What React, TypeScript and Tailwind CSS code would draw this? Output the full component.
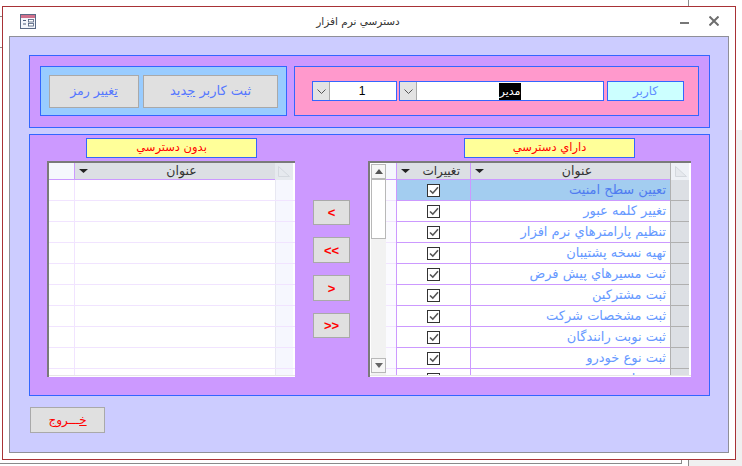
const rows = [
  "تعيين سطح امنيت",
  "تغيير كلمه عبور",
  "تنظيم پارامترهاي نرم افزار",
  "تهيه نسخه پشتيبان",
  "ثبت مسيرهاي پيش فرض",
  "ثبت مشتركين",
  "ثبت مشخصات شركت",
  "ثبت نوبت رانندگان",
  "ثبت نوع خودرو",
  "ثبت راننده",
];

const font = { fontFamily: '"DejaVu Sans", sans-serif' };

function Caret() {
  return (
    <svg width="9" height="4" viewBox="0 0 9 4" className="shrink-0">
      <path d="M0 0h9L4.5 4z" fill="#222" />
    </svg>
  );
}

function Corner() {
  return (
    <svg width="12" height="11" viewBox="0 0 12 11">
      <path d="M0.5 0.5L11.5 10.5H0.5z" fill="#e6e9ee" stroke="#d4d8de" />
    </svg>
  );
}

function Chevron() {
  return (
    <svg width="9" height="5" viewBox="0 0 9 5">
      <path d="M0.5 0.5L4.5 4.5L8.5 0.5" fill="none" stroke="#555" strokeWidth="1" />
    </svg>
  );
}

function Check() {
  return (
    <div className="w-[13px] h-[13px] shrink-0 border border-[#333] bg-white flex items-center justify-center">
      <svg width="10" height="9" viewBox="0 0 10 9">
        <path d="M1 4.5L3.8 7.2L9 1.2" fill="none" stroke="#555" strokeWidth="1.6" />
      </svg>
    </div>
  );
}

function ArrowBtn({ label, cls }: { label: string; cls: string }) {
  return (
    <button
      className={`${cls} w-[37px] bg-[#e0e0e0] border border-[#a9a9a9] flex items-center justify-center text-[#ff0000] text-[13px] font-bold leading-none`}
      style={{ fontFamily: '"Liberation Sans", sans-serif' }}
    >
      {label}
    </button>
  );
}

function RightGrid() {
  return (
    <div className="w-[323px] h-[216px] bg-white border-t-2 border-l-2 border-t-[#7a7a7a] border-l-[#7a7a7a] pb-[1px]">
      <div className="h-full flex overflow-hidden border-b border-[#e6e6e6]">
        <div className="w-[15px] mt-[1px] ml-[1px] shrink-0 bg-[#f2f2f2] flex flex-col">
          <div className="h-[15px] border border-[#b8b8b8] bg-[#f6f6f6] flex items-center justify-center">
            <svg width="8" height="5" viewBox="0 0 8 5"><path d="M4 0L8 5H0z" fill="#555" /></svg>
          </div>
          <div className="h-[60px] border border-[#b8b8b8] bg-white" />
          <div className="flex-1" />
          <div className="h-[15px] mb-[2px] border border-[#b8b8b8] bg-[#f6f6f6] flex items-center justify-center">
            <svg width="8" height="5" viewBox="0 0 8 5"><path d="M0 0H8L4 5z" fill="#666" /></svg>
          </div>
        </div>
        <div className="flex-1 flex flex-col min-w-0">
          <div className="h-[17px] flex shrink-0" style={font}>
            <div className="w-[10px] bg-[#f5f7fd] border-b border-[#cc99ff]" />
            <div className="w-[74px] bg-[#dcdfe4] border-l border-b border-[#cc99ff] flex items-center justify-between pl-1 pr-[10px] text-[12px] text-[#333]" dir="ltr">
              <Caret />
              <span>تغييرات</span>
            </div>
            <div className="w-[200px] bg-[#dcdfe4] border-l border-b border-[#cc99ff] flex items-center pl-1 text-[12.5px] text-[#333]">
              <Caret />
              <span className="flex-1 text-center">عنوان</span>
            </div>
            <div className="w-[19px] bg-[#eef1f6] border-l border-[#b0b0b0] flex items-center justify-center pl-[1px]">
              <Corner />
            </div>
          </div>
          {rows.map((r, i) => (
            <div key={i} className="h-[21px] shrink-0 flex" style={font}>
              <div className="w-[10px] bg-[#fbfbff] border-b border-[#f1e4ff]" />
              <div className={`w-[74px] border-l border-b border-[#cc99ff] flex items-center justify-center ${i === 0 ? "bg-[#a3cdf0]" : "bg-white"}`}>
                <Check />
              </div>
              <div
                dir="rtl"
                className={`w-[200px] border-l border-b border-[#cc99ff] flex items-center pr-[4px] text-[13px] whitespace-nowrap ${i === 0 ? "bg-[#a3cdf0] text-[#4f7cf0]" : "bg-white text-[#6699ff]"}`}
              >
                {r}
              </div>
              <div className="w-[19px] bg-[#dcdfe4] border-l border-b border-[#b0b0b0]" />
            </div>
          ))}
        </div>
      </div>
    </div>
  );
}

function LeftGrid() {
  return (
    <div className="w-[248px] h-[216px] bg-white border-t-2 border-l-2 border-t-[#7a7a7a] border-l-[#7a7a7a] pb-[1px]">
      <div className="h-full flex flex-col overflow-hidden border-b border-[#e6e6e6]">
        <div className="h-[17px] flex shrink-0" style={font}>
          <div className="w-[25px] bg-[#f5f7fd] border-b border-[#cc99ff]" />
          <div className="w-[201px] bg-[#dcdfe4] border-l border-b border-[#cc99ff] flex items-center pl-1 text-[12.5px] text-[#333]">
            <Caret />
            <span className="flex-1 text-center">عنوان</span>
          </div>
          <div className="w-[18px] bg-[#e6e9ee] flex items-center justify-center">
            <Corner />
          </div>
        </div>
        {Array.from({ length: 10 }).map((_, i) => (
          <div key={i} className="h-[21px] shrink-0 flex border-b border-[#f1e4ff]">
            <div className="w-[25px]" />
            <div className="w-[201px] border-l border-[#f1e4ff]" />
            <div className="w-[18px] bg-[#f6f7fe] border-l border-[#e8e8f2]" />
          </div>
        ))}
      </div>
    </div>
  );
}

export default function App() {
  return (
    <div className="w-[742px] h-[466px] overflow-hidden bg-[#f0f0f0] relative" style={font}>
      {/* desktop windows behind the dialog */}
      <div className="absolute left-0 top-0 w-[742px] h-[130px] bg-white" />
      <div className="absolute left-0 top-0 w-[689px] h-[466px] bg-white border-r border-[#8a8a8a]" />
      <div className="absolute left-0 top-[463px] w-[682px] h-[1px] bg-[#8a8a8a]" />
      <div className="absolute left-[681px] top-[459px] w-[1px] h-[5px] bg-[#8a8a8a]" />
      <div className="absolute left-0 top-[16px] w-[2px] h-[1px] bg-[#8a8a8a]" />
      <div className="absolute left-0 top-[47px] w-[2px] h-[1px] bg-[#8a8a8a]" />

      <div className="absolute left-[2px] top-[6px] w-[734px] h-[454px] bg-white border border-[#a83236] flex flex-col">
        <div className="h-[29px] flex items-center shrink-0 pl-[17px] pr-[16px]">
          <svg width="16" height="15" viewBox="0 0 16 15">
            <rect x="0.5" y="0.5" width="15" height="14" fill="#f4f6fb" stroke="#5a6a85" />
            <rect x="1" y="1" width="14" height="3" fill="#d0708c" />
            <path d="M3 6.5h3M3 10h3" stroke="#4c5d7a" />
            <rect x="8.5" y="5.5" width="5" height="2.5" fill="#fff" stroke="#4c5d7a" strokeWidth="0.8" />
            <rect x="8.5" y="9.5" width="5" height="2.5" fill="#fff" stroke="#4c5d7a" strokeWidth="0.8" />
          </svg>
          <div className="flex-1 text-center text-[10.5px] text-[#333]" dir="rtl">دسترسي نرم افزار</div>
          <div className="flex items-center gap-[20px]">
            <div className="w-[9px] h-[2px] bg-[#777] mt-[2px]" />
            <svg width="10" height="10" viewBox="0 0 10 10" className="-mt-[1px]">
              <path d="M0.5 0.5L9.5 9.5M9.5 0.5L0.5 9.5" stroke="#6e6e6e" strokeWidth="2" />
            </svg>
          </div>
        </div>
        <div className="ml-[6px] w-[720px] h-[417px] bg-[#ccccff] border border-[#8f8f98] flex flex-col pl-[19px] pt-[18px]">
          <div className="w-[681px] h-[73px] bg-[#cc99ff] border border-[#3366ff] flex gap-[7px] items-start pt-[10px] pl-[10px]">
            <div className="w-[247px] h-[50px] bg-[#99ccff] border border-[#3366ff] flex items-center gap-[4px] pl-[8px]">
              <button className="w-[90px] h-[33px] bg-[#e0e0e0] border border-[#a9a9a9] text-[12.5px] text-[#5577ff]" dir="rtl">
                <u>ت</u>غيير رمز
              </button>
              <button className="w-[135px] h-[33px] bg-[#e0e0e0] border border-[#a9a9a9] text-[13px] text-[#5577ff]" dir="rtl">
                ثبت کاربر <u>ج</u>دید
              </button>
            </div>
            <div className="w-[405px] h-[50px] bg-[#ff99cc] border border-[#3366ff] flex items-center pl-[17px]">
              <div className="w-[85px] h-[20px] bg-white border border-[#3366ff] flex items-center">
                <div className="w-[17px] h-full bg-[#e3e3e3] border-r border-[#a9a9a9] flex items-center justify-center"><Chevron /></div>
                <div className="flex-1 text-center text-[12px] text-black pr-[2px]" style={{ fontFamily: '"Liberation Sans", sans-serif' }}>1</div>
              </div>
              <div className="w-[205px] h-[20px] ml-[2px] bg-white border border-[#3366ff] flex items-center">
                <div className="w-[17px] h-full bg-[#e3e3e3] border-r border-[#a9a9a9] flex items-center justify-center"><Chevron /></div>
                <div className="flex-1 flex justify-center">
                  <span className="bg-black text-white text-[11px] leading-[17px] px-[1px]" dir="rtl">مدير</span>
                </div>
              </div>
              <div className="w-[77px] h-[20px] ml-[3px] bg-[#ccffff] border border-[#3366ff] flex items-center justify-center text-[12px] text-[#5f8cff]" dir="rtl">کاربر</div>
            </div>
          </div>
          <div className="w-[681px] h-[262px] mt-[6px] bg-[#cc99ff] border border-[#3366ff] flex flex-col">
            <div className="flex h-[26px] items-start pt-[3px] shrink-0">
              <div className="ml-[56px] w-[171px] h-[20px] bg-[#ffff99] border border-[#3366ff] flex items-center justify-center text-[11.5px] text-[#ff0000]" dir="rtl">بدون دسترسي</div>
              <div className="ml-[207px] w-[171px] h-[20px] bg-[#ffff99] border border-[#3366ff] flex items-center justify-center text-[11.5px] text-[#ff0000]" dir="rtl">داراي دسترسي</div>
            </div>
            <div className="flex pl-[17px] items-start">
              <LeftGrid />
              <div className="ml-[18px] w-[37px] pt-[39px] flex flex-col">
                <ArrowBtn label="<" cls="h-[25px]" />
                <ArrowBtn label="<<" cls="h-[26px] mt-[12px]" />
                <ArrowBtn label=">" cls="h-[26px] mt-[12px]" />
                <ArrowBtn label=">>" cls="h-[25px] mt-[12px]" />
              </div>
              <div className="ml-[18px]"><RightGrid /></div>
            </div>
          </div>
          <button className="mt-[11px] ml-[1px] w-[75px] h-[26px] bg-[#e0e0e0] border border-[#a9a9a9] text-[12px] text-[#ff0000]" dir="rtl">
            <u>خ</u>ـــروج
          </button>
        </div>
      </div>
    </div>
  );
}
